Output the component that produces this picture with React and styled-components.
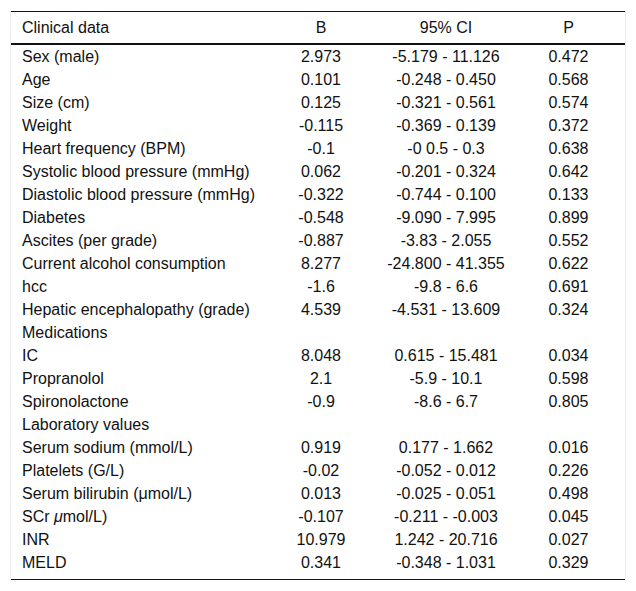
import React from "react";
import styled, { createGlobalStyle } from "styled-components";

const Global = createGlobalStyle`
  body {
    margin: 0;
    background: #fff;
    font-family: "Liberation Sans", Arial, sans-serif;
    color: #111;
  }
`;

const Frame = styled.div`
  margin: 11px 10px 0 10px;
  border-left: 1px solid #ececec;
  border-right: 1px solid #ececec;
`;

const Table = styled.div`
  border-top: 1px solid #111;
  border-bottom: 1px solid #111;
  padding-bottom: 5px;
`;

const Row = styled.div`
  display: grid;
  grid-template-columns: 251px 118px 132px 1fr;
  align-items: center;
  height: ${(p) => (p.head ? "31px" : "23px")};
  border-bottom: ${(p) => (p.head ? "2px solid #111" : "none")};
  font-size: 16px;
`;

const Label = styled.span`
  padding-left: 11px;
  white-space: nowrap;
`;

const Cell = styled.span`
  text-align: center;
  white-space: nowrap;
`;

const rows = [
  ["Sex (male)", "2.973", "-5.179 - 11.126", "0.472"],
  ["Age", "0.101", "-0.248 - 0.450", "0.568"],
  ["Size (cm)", "0.125", "-0.321 - 0.561", "0.574"],
  ["Weight", "-0.115", "-0.369 - 0.139", "0.372"],
  ["Heart frequency (BPM)", "-0.1", "-0 0.5 - 0.3", "0.638"],
  ["Systolic blood pressure (mmHg)", "0.062", "-0.201 - 0.324", "0.642"],
  ["Diastolic blood pressure (mmHg)", "-0.322", "-0.744 - 0.100", "0.133"],
  ["Diabetes", "-0.548", "-9.090 - 7.995", "0.899"],
  ["Ascites (per grade)", "-0.887", "-3.83 - 2.055", "0.552"],
  ["Current alcohol consumption", "8.277", "-24.800 - 41.355", "0.622"],
  ["hcc", "-1.6", "-9.8 - 6.6", "0.691"],
  ["Hepatic encephalopathy (grade)", "4.539", "-4.531 - 13.609", "0.324"],
  ["Medications", "", "", ""],
  ["IC", "8.048", "0.615 - 15.481", "0.034"],
  ["Propranolol", "2.1", "-5.9 - 10.1", "0.598"],
  ["Spironolactone", "-0.9", "-8.6 - 6.7", "0.805"],
  ["Laboratory values", "", "", ""],
  ["Serum sodium (mmol/L)", "0.919", "0.177 - 1.662", "0.016"],
  ["Platelets (G/L)", "-0.02", "-0.052 - 0.012", "0.226"],
  ["Serum bilirubin (\u03bcmol/L)", "0.013", "-0.025 - 0.051", "0.498"],
  [<>SCr <i>{"\u03bc"}</i>mol/L)</>, "-0.107", "-0.211 - -0.003", "0.045"],
  ["INR", "10.979", "1.242 - 20.716", "0.027"],
  ["MELD", "0.341", "-0.348 - 1.031", "0.329"],
];

export default function App() {
  return (
    <>
      <Global />
      <Frame>
        <Table>
          <Row head>
            <Label>Clinical data</Label>
            <Cell>B</Cell>
            <Cell>95% CI</Cell>
            <Cell>P</Cell>
          </Row>
          {rows.map((r, i) => (
            <Row key={i}>
              <Label>{r[0]}</Label>
              <Cell>{r[1]}</Cell>
              <Cell>{r[2]}</Cell>
              <Cell>{r[3]}</Cell>
            </Row>
          ))}
        </Table>
      </Frame>
    </>
  );
}
